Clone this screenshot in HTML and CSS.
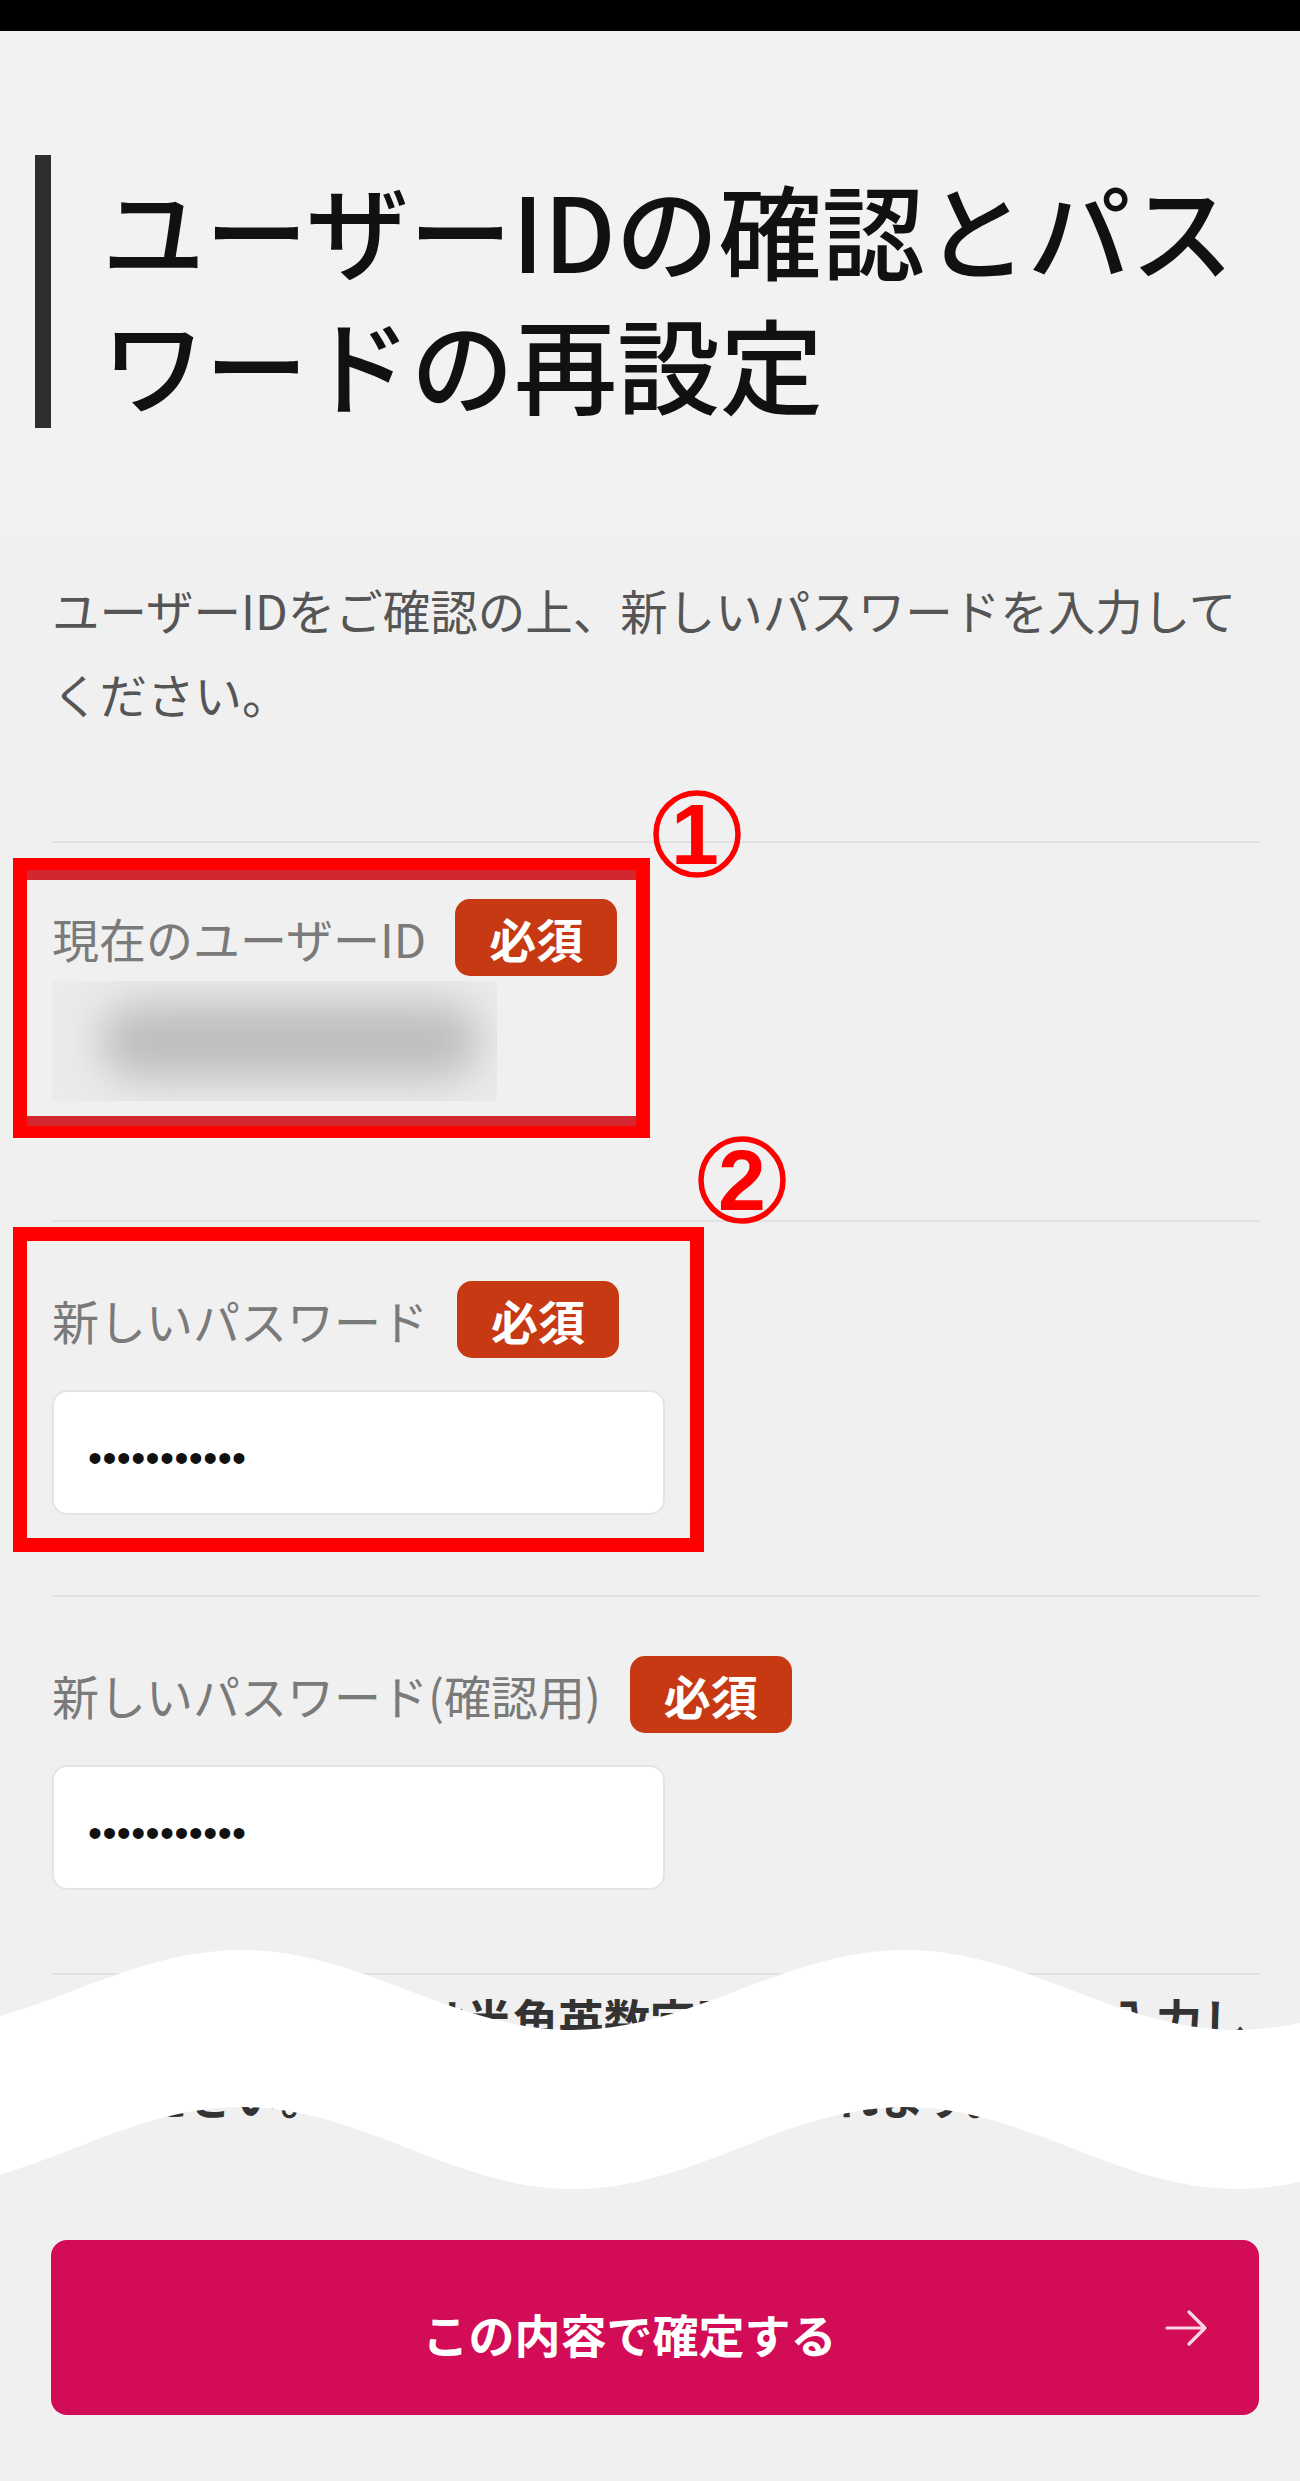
FILE: index.html
```html
<!DOCTYPE html>
<html lang="ja">
<head>
<meta charset="utf-8">
<title>ユーザーIDの確認とパスワードの再設定</title>
<link rel="stylesheet" href="styles.css">
</head>
<body>
<div class="page">
  <div class="topbar"></div>

  <header class="hero">
    <div class="title-wrap">
      <span class="title-bar"></span>
      <h1 class="title">ユーザーIDの確認とパスワードの再設定</h1>
    </div>
  </header>

  <main class="main">
    <p class="desc">ユーザーIDをご確認の上、新しいパスワードを入力してください。</p>

    <section class="field field-first">
      <div class="label-row">
        <span class="label">現在のユーザーID</span>
        <span class="badge">必須</span>
      </div>
      <div class="blur-wrap"><div class="blur-blob"></div></div>
    </section>

    <section class="field field-second">
      <div class="label-row">
        <span class="label">新しいパスワード</span>
        <span class="badge">必須</span>
      </div>
      <div class="input"><span class="dots">•••••••••••</span></div>
    </section>

    <section class="field field-third">
      <div class="label-row">
        <span class="label">新しいパスワード(確認用)</span>
        <span class="badge">必須</span>
      </div>
      <div class="input"><span class="dots">•••••••••••</span></div>
    </section>

    <section class="field field-note">
      <p class="note">新しいパスワードは半角英数字記号を組み合わせて入力してください。大文字と小文字は区別されます。</p>
    </section>

    <button class="submit" type="button">
      <span class="submit-spacer"></span>
      <span class="submit-text">この内容で確定する</span>
      <svg class="submit-arrow" width="44" height="42" viewBox="0 0 44 42" aria-hidden="true">
        <path d="M3 21 H40 M25 5 L41 21 L25 37" fill="none" stroke="#f9d6e2" stroke-width="3.2" stroke-linecap="round" stroke-linejoin="round"/>
      </svg>
    </button>
  </main>

  <!-- annotations over the screenshot -->
  <div class="mark mark-1"></div>
  <div class="mark mark-2"></div>
  <svg class="num num-1" width="92" height="92" viewBox="0 0 92 92" aria-hidden="true">
    <circle cx="46" cy="46" r="41" fill="none" stroke="#ff0000" stroke-width="5.5"/>
    <text x="44" y="76" text-anchor="middle" class="num-text">1</text>
  </svg>
  <svg class="num num-2" width="92" height="92" viewBox="0 0 92 92" aria-hidden="true">
    <circle cx="46" cy="46" r="41" fill="none" stroke="#ff0000" stroke-width="5.5"/>
    <text x="46" y="76" text-anchor="middle" class="num-text">2</text>
  </svg>

  <svg class="wave" width="1300" height="290" viewBox="0 0 1300 290" aria-hidden="true">
    <path fill="#ffffff" d="M -91 100 C 30 100, 120 20, 241 20 C 362 20, 452 100, 573 100 C 694 100, 784 20, 905 20 C 1026 20, 1116 100, 1237 100 C 1358 100, 1448 20, 1569 20 L 1569 177 C 1448 177, 1358 259, 1237 259 C 1116 259, 1026 177, 905 177 C 784 177, 694 259, 573 259 C 452 259, 362 177, 241 177 C 120 177, 30 259, -91 259 Z"/>
  </svg>
</div>
</body>
</html>
```

FILE: styles.css
```css
* {
  box-sizing: border-box;
}

html, body {
  margin: 0;
  padding: 0;
}

body {
  background: #f0f0f0;
  font-family: "Noto Sans CJK JP", "Noto Sans", sans-serif;
  color: #222;
}

.page {
  position: relative;
  width: 1300px;
  min-height: 2481px;
  overflow: hidden;
}

.topbar {
  height: 31px;
  background: #000;
}

.hero {
  background: #f2f2f2;
  padding: 124px 30px 106px 35px;
}

.title-wrap {
  display: flex;
  align-items: flex-start;
}

.title-bar {
  flex: none;
  width: 16px;
  height: 273px;
  background: #2e2e2e;
}

.title {
  flex: 1;
  margin: 7px 0 0 51px;
  font-size: 103px;
  line-height: 134px;
  font-weight: 500;
  color: #111;
}

.main {
  padding: 0 40px 0 52px;
}

.desc {
  margin: 32px 0 0 0;
  font-size: 47.5px;
  line-height: 84px;
  color: #555;
}

.field {
  border-top: 2px solid #e2e2e2;
  padding-top: 59px;
}

.field-first {
  margin-top: 105px;
  padding-top: 56px;
  padding-bottom: 119px;
}

.field-second {
  padding-bottom: 80px;
}

.field-third {
  padding-bottom: 83px;
}

.field-note {
  padding-top: 5px;
}

.label-row {
  display: flex;
  align-items: center;
  gap: 29px;
  height: 77px;
}

.label {
  font-size: 47px;
  color: #7a7a7a;
}

.badge {
  display: inline-flex;
  align-items: center;
  justify-content: center;
  height: 77px;
  padding: 0 34px;
  border-radius: 15px;
  background: #c63913;
  color: #fff;
  font-size: 47px;
  font-weight: 700;
}

.blur-wrap {
  margin-top: 5px;
  width: 445px;
  height: 120px;
  background: #ebebeb;
  display: flex;
  align-items: center;
  padding-left: 48px;
  overflow: hidden;
}

.blur-blob {
  width: 380px;
  height: 76px;
  border-radius: 38px;
  background: #bebebe;
  filter: blur(20px);
}

.input {
  margin-top: 32px;
  width: 613px;
  height: 125px;
  background: #fff;
  border: 2px solid #e4e4e4;
  border-radius: 15px;
  display: flex;
  align-items: center;
  padding: 10px 0 0 34px;
}

.dots {
  font-family: "Liberation Sans", Arial, sans-serif;
  font-size: 40px;
  letter-spacing: 0.4px;
  color: #111;
  line-height: 1;
}

.note {
  margin: 0;
  font-size: 46px;
  line-height: 76px;
  font-weight: 700;
  color: #333;
}

.submit {
  margin-top: 108px;
  width: 100%;
  height: 175px;
  margin-left: -1px;
  border: none;
  border-radius: 16px;
  background: #d20c56;
  display: grid;
  grid-template-columns: 1fr auto 1fr;
  align-items: center;
  padding: 0 51px 0 0;
  font-family: "Noto Sans CJK JP", "Noto Sans", sans-serif;
  cursor: pointer;
}

.submit-text {
  padding-top: 10px;
  font-size: 46px;
  font-weight: 700;
  color: #fff;
}

.submit-arrow {
  justify-self: end;
}

.mark {
  position: absolute;
  border-style: solid;
  border-color: #ff0000;
}

.mark-1 {
  left: 13px;
  top: 858px;
  width: 637px;
  height: 280px;
  border-width: 12px 14px;
  box-shadow: inset 0 10px 0 #d3262e, inset 0 -10px 0 #d3262e;
}

.mark-2 {
  left: 13px;
  top: 1227px;
  width: 691px;
  height: 325px;
  border-width: 14px;
}

.num {
  position: absolute;
  overflow: visible;
}

.num-1 {
  left: 651px;
  top: 788px;
}

.num-2 {
  left: 696px;
  top: 1134px;
}

.num-text {
  font-family: "Liberation Sans", Arial, sans-serif;
  font-weight: 700;
  font-size: 86px;
  fill: #ff0000;
}

.wave {
  position: absolute;
  left: 0;
  top: 1930px;
  z-index: 2;
}
```
